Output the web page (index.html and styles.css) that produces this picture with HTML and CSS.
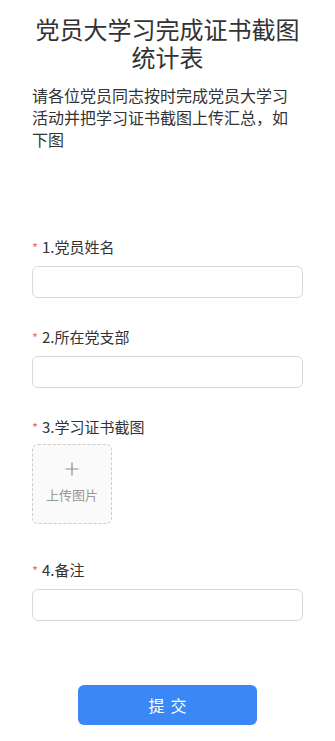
FILE: index.html
```html
<!DOCTYPE html>
<html lang="zh-CN">
<head>
<meta charset="utf-8">
<meta name="viewport" content="width=device-width, initial-scale=1">
<title>党员大学习完成证书截图统计表</title>
<link rel="stylesheet" href="styles.css">
</head>
<body>
<main class="page">
  <h1 class="title">党员大学习完成证书截图统计表</h1>
  <p class="desc">请各位党员同志按时完成党员大学习活动并把学习证书截图上传汇总，如下图</p>

  <form class="form">
    <div class="field">
      <div class="label"><span class="req">*</span>1.党员姓名</div>
      <input class="input" type="text">
    </div>
    <div class="field">
      <div class="label"><span class="req">*</span>2.所在党支部</div>
      <input class="input" type="text">
    </div>
    <div class="field field-upload">
      <div class="label label-upload"><span class="req">*</span>3.学习证书截图</div>
      <div class="upload">
        <svg class="plus" width="14" height="14" viewBox="0 0 14 14"><path d="M7 0.5V13.5M0.5 7H13.5" stroke="#8c8c8c" stroke-width="1.2" fill="none"/></svg>
        <span class="upload-text">上传图片</span>
      </div>
    </div>
    <div class="field field-last">
      <div class="label"><span class="req">*</span>4.备注</div>
      <input class="input" type="text">
    </div>
    <div class="actions">
      <button class="submit" type="button">提交</button>
    </div>
  </form>
</main>
</body>
</html>
```

FILE: styles.css
```css
html, body {
  margin: 0;
  padding: 0;
  background: #ffffff;
}
body {
  font-family: "Noto Sans CJK SC", "Noto Sans", sans-serif;
  color: #333333;
}
.page {
  padding: 15px 32px 16px 32px;
}
.title {
  margin: 0;
  font-size: 24px;
  line-height: 28px;
  font-weight: 400;
  text-align: center;
  color: #333333;
}
.desc {
  margin: 13px 0 0 0;
  font-size: 16px;
  line-height: 22px;
  color: #333333;
}
.form {
  margin-top: 87px;
  display: flex;
  flex-direction: column;
}
.field {
  display: flex;
  flex-direction: column;
  margin-bottom: 29px;
}
.field-upload {
  margin-bottom: 36px;
}
.field-last {
  margin-bottom: 64px;
}
.label {
  font-size: 15px;
  line-height: 20px;
  margin-bottom: 9px;
  color: #333333;
  display: flex;
  align-items: flex-start;
}
.label-upload {
  margin-bottom: 7px;
}
.req {
  color: #f56c6c;
  font-size: 13px;
  line-height: 18px;
  padding-top: 2px;
  width: 10px;
  flex: none;
}
.input {
  box-sizing: border-box;
  width: 100%;
  height: 32px;
  margin: 0;
  border: 1px solid #d9d9d9;
  border-radius: 6px;
  background: #ffffff;
  outline: none;
  font: inherit;
}
.upload {
  box-sizing: border-box;
  width: 80px;
  height: 80px;
  border: 1px dashed #cccccc;
  border-radius: 6px;
  background: #fafafa;
  display: flex;
  flex-direction: column;
  align-items: center;
  padding-top: 17px;
}
.plus {
  display: block;
}
.upload-text {
  margin-top: 10px;
  font-size: 13px;
  line-height: 18px;
  color: #999999;
}
.actions {
  display: flex;
  justify-content: center;
}
.submit {
  width: 179px;
  height: 40px;
  border: none;
  border-radius: 6px;
  background: #3a88f5;
  color: #ffffff;
  font-family: "Noto Sans CJK SC", "Noto Sans", sans-serif;
  font-size: 16px;
  letter-spacing: 6px;
  padding: 0 0 0 6px;
  cursor: pointer;
}
```
